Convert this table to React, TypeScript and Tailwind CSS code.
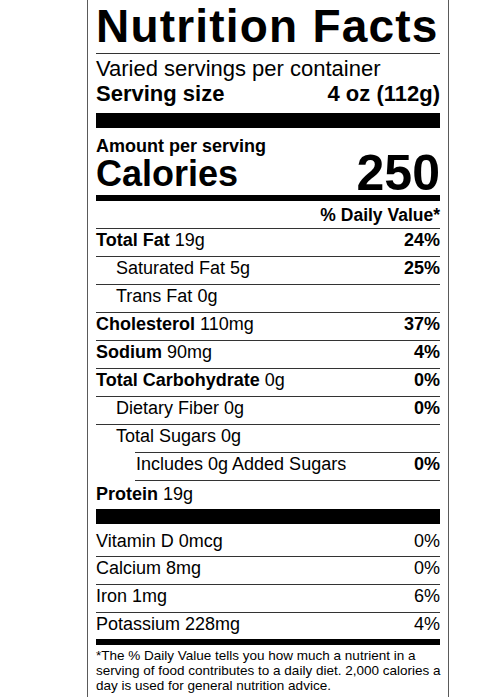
import React from "react";

type Row = {
  label: string;
  amount: string;
  dv?: string;
  bold?: boolean;
  indent?: boolean;
};

const rows: Row[] = [
  { label: "Total Fat", amount: "19g", dv: "24%", bold: true },
  { label: "Saturated Fat", amount: "5g", dv: "25%", indent: true },
  { label: "Trans Fat", amount: "0g", indent: true },
  { label: "Cholesterol", amount: "110mg", dv: "37%", bold: true },
  { label: "Sodium", amount: "90mg", dv: "4%", bold: true },
  { label: "Total Carbohydrate", amount: "0g", dv: "0%", bold: true },
  { label: "Dietary Fiber", amount: "0g", dv: "0%", indent: true },
];

const vitamins = [
  { label: "Calcium 8mg", dv: "0%" },
  { label: "Iron 1mg", dv: "6%" },
];

export default function App() {
  return (
    <div className="min-h-[697px] bg-white text-black font-['Liberation_Sans',Arial,sans-serif]">
      <div className="ml-[87px] w-[362px] h-[697px] border-x border-[#5a5a5a] px-2">
        {/* header */}
        <div className="h-[54px] pt-[3px] border-b border-[#333]">
          <h1 className="text-[46px] leading-[46px] font-bold tracking-[1.2px] whitespace-nowrap">
            Nutrition Facts
          </h1>
        </div>

        <div className="pt-[2px] text-[22px] leading-[25px]">
          <p>Varied servings per container</p>
          <div className="flex justify-between font-bold">
            <span>Serving size</span>
            <span>4 oz (112g)</span>
          </div>
        </div>

        <div className="mt-[7px] h-[15px] bg-black" />

        <p className="mt-[9px] text-[18px] leading-[18px] font-bold">Amount per serving</p>
        <div className="flex justify-between items-start h-[40px]">
          <span className="mt-[3px] text-[36px] leading-[32px] font-bold">Calories</span>
          <span className="-mt-[7px] text-[50px] leading-[50px] font-bold">250</span>
        </div>
        <div className="h-[6px] bg-black" />

        <div className="h-[28px] pt-[4px] border-b border-[#333] text-right text-[17.5px] leading-[20px] font-bold">
          % Daily Value*
        </div>

        {rows.map((r) => (
          <div
            key={r.label}
            className="h-[28px] border-b border-[#333] flex justify-between text-[18px] leading-[22px]"
          >
            <span className={r.indent ? "pl-[20px]" : ""}>
              {r.bold ? <b>{r.label}</b> : r.label} {r.amount}
            </span>
            {r.dv && <b>{r.dv}</b>}
          </div>
        ))}

        <div className="h-[27px] pl-[20px] text-[18px] leading-[22px]">Total Sugars 0g</div>
        <div className="ml-[39px] h-[29px] border-y border-[#333] pl-[1px] flex justify-between text-[18px] leading-[22px]">
          <span>Includes 0g Added Sugars</span>
          <b>0%</b>
        </div>

        <div className="h-[28px] pt-[2px] text-[18px] leading-[22px]">
          <b>Protein</b> 19g
        </div>
        <div className="h-[15px] bg-black" />

        <div className="h-[33px] pt-[6px] border-b border-[#333] flex justify-between text-[18px] leading-[22px]">
          <span>Vitamin D 0mcg</span>
          <span>0%</span>
        </div>
        {vitamins.map((v) => (
          <div
            key={v.label}
            className="h-[28px] border-b border-[#333] flex justify-between text-[18px] leading-[22px]"
          >
            <span>{v.label}</span>
            <span>{v.dv}</span>
          </div>
        ))}
        <div className="h-[26px] flex justify-between text-[18px] leading-[22px]">
          <span>Potassium 228mg</span>
          <span>4%</span>
        </div>
        <div className="h-[6px] bg-black" />

        <div className="mt-[3px] text-[13.5px] leading-[15px] whitespace-nowrap">
          <p>*The % Daily Value tells you how much a nutrient in a</p>
          <p>serving of food contributes to a daily diet. 2,000 calories a</p>
          <p>day is used for general nutrition advice.</p>
        </div>
      </div>
    </div>
  );
}
